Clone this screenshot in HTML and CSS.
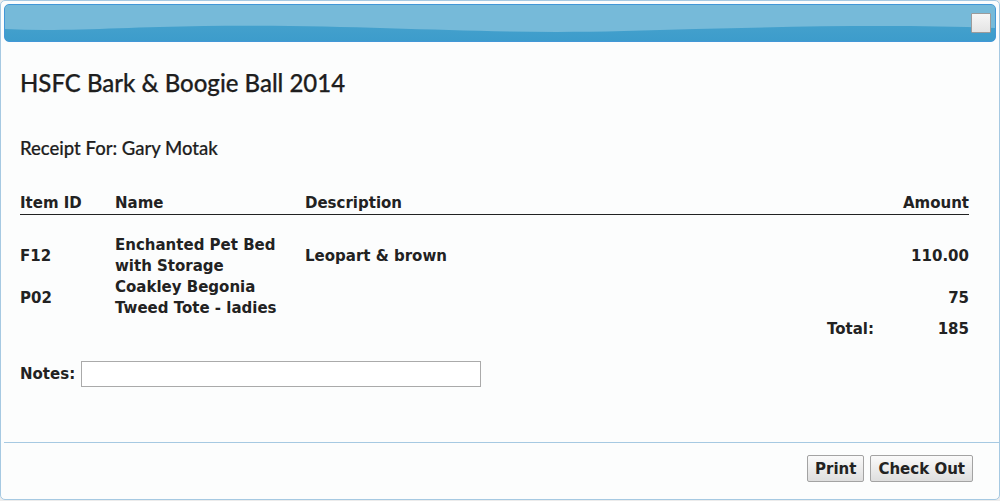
FILE: index.html
```html
<!DOCTYPE html>
<html>
<head>
<meta charset="utf-8">
<link rel="stylesheet" href="styles.css">
</head>
<body>
<div class="dialog">
  <div class="titlebar">
    <svg class="wave" width="992" height="38" viewBox="0 0 992 38" preserveAspectRatio="none">
      <path d="M0 0 H992 V24 C880 20 760 23 620 27 C470 31 370 20 200 22 C120 23 60 28 0 25 Z" fill="#76bad9"/>
    </svg>
    <button class="close" aria-label="close"></button>
  </div>
  <div class="content">
    <h1 class="event">HSFC Bark &amp; Boogie Ball 2014</h1>
    <h2 class="receipt">Receipt For: Gary Motak</h2>
    <table class="items">
      <thead>
        <tr><th class="c-id">Item ID</th><th class="c-name">Name</th><th class="c-desc">Description</th><th class="c-amt">Amount</th></tr>
      </thead>
      <tbody>
        <tr class="spacer"><td colspan="4"></td></tr>
        <tr><td>F12</td><td>Enchanted Pet Bed<br>with Storage</td><td>Leopart &amp; brown</td><td class="c-amt">110.00</td></tr>
        <tr><td>P02</td><td>Coakley Begonia<br>Tweed Tote - ladies</td><td></td><td class="c-amt">75</td></tr>
        <tr class="total"><td></td><td></td><td class="c-total">Total:</td><td class="c-amt">185</td></tr>
      </tbody>
    </table>
    <div class="notes">
      <label class="notes-label" for="notes">Notes:</label>
      <input id="notes" class="notes-input" type="text">
    </div>
  </div>
  <div class="buttonpane">
    <button class="btn">Print</button>
    <button class="btn">Check Out</button>
  </div>
</div>
</body>
</html>
```
FILE: styles.css
```css
html, body {
  margin: 0;
  padding: 0;
  background: #ececec;
}
body {
  width: 1000px;
  height: 501px;
  overflow: hidden;
}
.dialog {
  box-sizing: border-box;
  width: 1000px;
  height: 500px;
  border: 1px solid #a6c9e2;
  border-radius: 5px;
  background: #fcfdfd;
  padding: 3px;
  display: flex;
  flex-direction: column;
}
.titlebar {
  position: relative;
  height: 38px;
  box-sizing: border-box;
  border: 1px solid #4297d7;
  border-radius: 5px;
  background: linear-gradient(#4ca6ce, #3d9ccb);
  overflow: hidden;
  flex: none;
}
.wave {
  position: absolute;
  left: -1px;
  top: -1px;
}
.close {
  position: absolute;
  right: 4px;
  top: 8px;
  width: 20px;
  height: 20px;
  padding: 0;
  border: 1px solid #9b9b9b;
  border-radius: 1px;
  background: linear-gradient(#f6f6f6, #e4e4e4);
}
.content {
  flex: 1;
  padding: 0 27px 0 16px;
  font-family: "DejaVu Sans", Verdana, sans-serif;
  color: #222;
}
.event {
  margin: 27px 0 0;
  font-family: Lato, sans-serif;
  font-weight: 500;
  font-size: 24px;
  line-height: 28px;
  color: #1e1e1e;
  -webkit-text-stroke: 0.25px #1e1e1e;
}
.receipt {
  margin: 40px 0 0;
  font-family: Lato, sans-serif;
  font-weight: 500;
  font-size: 18.5px;
  line-height: 22px;
  color: #1e1e1e;
  -webkit-text-stroke: 0.2px #1e1e1e;
}
.items {
  margin-top: 34px;
  width: 100%;
  border-collapse: collapse;
  font-size: 15px;
  font-weight: bold;
  line-height: 21px;
}
.items th {
  text-align: left;
  padding: 0;
  border-bottom: 1px solid #222;
  line-height: 21px;
}
.items td {
  padding: 0;
  vertical-align: middle;
}
.c-id { width: 95px; }
.c-name { width: 190px; }
.items th.c-amt { width: 95px; }
.items .c-amt { text-align: right; }
.spacer td { height: 20px; }
.total td { height: 21px; }
.items .c-total { text-align: right; }
.notes {
  margin-top: 21px;
  display: flex;
  align-items: center;
  gap: 6px;
}
.notes-label {
  font-size: 15px;
  font-weight: bold;
}
.notes-input {
  box-sizing: border-box;
  width: 400px;
  height: 26px;
  border: 1px solid #aaa;
  background: #fff;
  margin: 0;
}
.buttonpane {
  flex: none;
  border-top: 1px solid #a6c9e2;
  height: 54px;
  display: flex;
  justify-content: flex-end;
  align-items: flex-start;
  gap: 6px;
  padding: 12px 26px 0 0;
  margin-right: -3px;
  box-sizing: border-box;
}
.btn {
  height: 27px;
  padding: 0 7px;
  font-family: "DejaVu Sans", Verdana, sans-serif;
  font-weight: bold;
  font-size: 15px;
  color: #222;
  border: 1px solid #a3a3a3;
  border-radius: 2px;
  background: linear-gradient(#fafafa, #dedede);
}
```
